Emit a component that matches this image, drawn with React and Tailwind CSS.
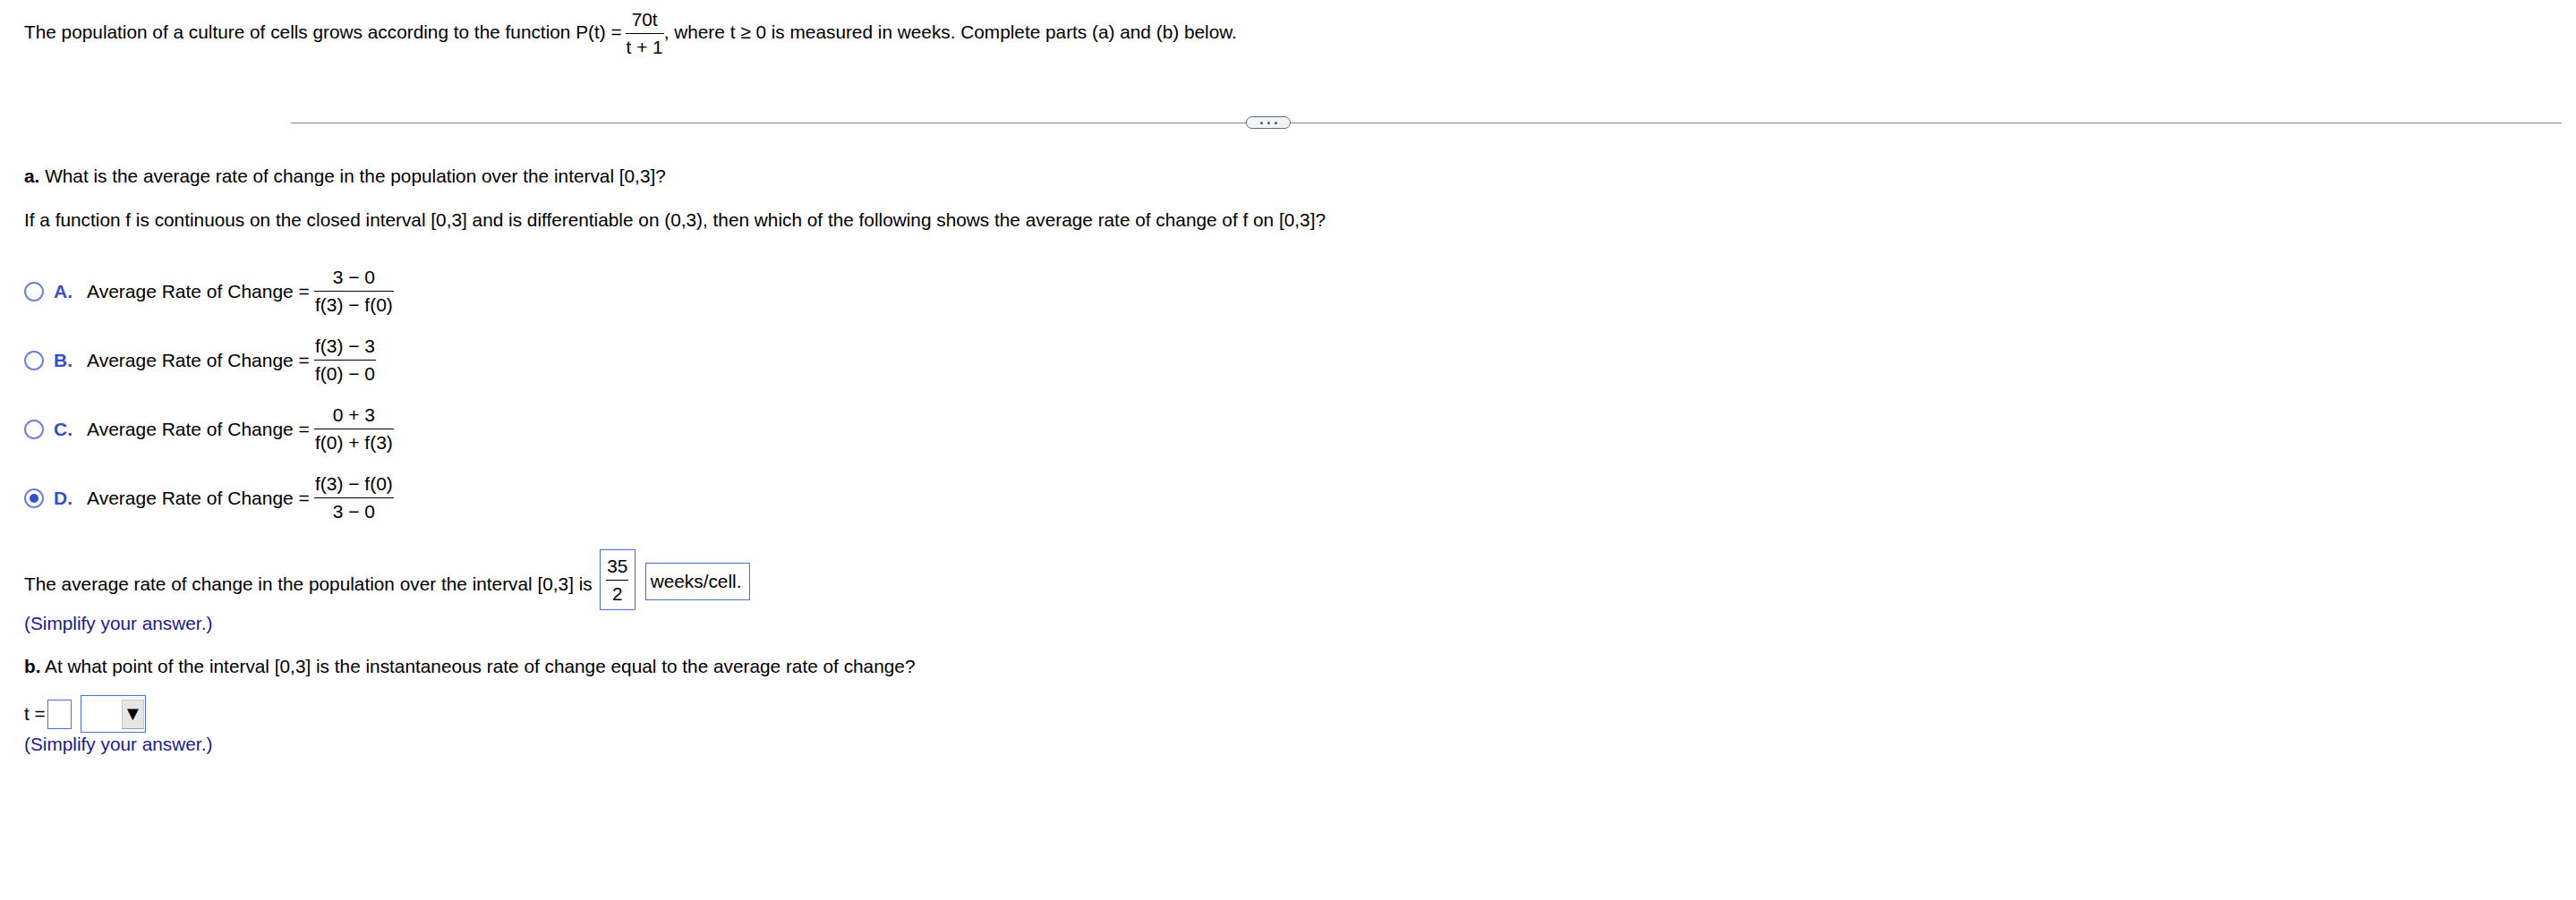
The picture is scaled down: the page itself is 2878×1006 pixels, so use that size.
import React from "react";

function Frac({ num, den, className = "" }) {
  return (
    <span className={"inline-flex flex-col items-center align-middle " + className}>
      <span className="px-[1px] leading-[24px] pb-[3px] whitespace-nowrap">{num}</span>
      <span className="w-full h-px bg-black"></span>
      <span className="px-[1px] leading-[24px] pt-[3px] whitespace-nowrap">{den}</span>
    </span>
  );
}

function Option({ letter, num, den, selected }) {
  return (
    <div className="h-[77px] flex items-center text-[21px]">
      <span className="w-[22px] h-[22px] rounded-full border-2 border-[#7081d6] bg-white flex items-center justify-center shrink-0">
        {selected && <span className="w-[10px] h-[10px] rounded-full bg-[#3650c6]"></span>}
      </span>
      <span className="ml-[11px] w-[37px] font-bold text-[#3a4fc4]">{letter}.</span>
      <span className="whitespace-nowrap">Average Rate of Change =</span>
      <Frac num={num} den={den} className="ml-[5px]" />
    </div>
  );
}

export default function App() {
  return (
    <div className="w-[2878px] min-h-[1006px] bg-white text-black text-[20.8px] font-['Liberation_Sans',Arial,sans-serif]">
      <div className="px-[27px]">
        <div className="h-[74px] flex items-center">
          <span className="whitespace-nowrap">
            The population of a culture of cells grows according to the function P(t) =
            <Frac num="70t" den="t + 1" className="ml-[4px]" />, where t ≥ 0 is measured in weeks. Complete parts (a) and (b) below.
          </span>
        </div>
      </div>

      <div className="mt-[56px] h-[14px] flex items-center pl-[325px] pr-[16px]">
        <div className="w-[1067px] h-px bg-[#7d8692]"></div>
        <div className="w-[50px] h-[14px] rounded-full border border-[#5f6b7a] bg-[#f3f4f6] flex items-center justify-center gap-[5px]">
          <span className="w-[3px] h-[3px] rounded-full bg-[#4b5563]"></span>
          <span className="w-[3px] h-[3px] rounded-full bg-[#4b5563]"></span>
          <span className="w-[3px] h-[3px] rounded-full bg-[#4b5563]"></span>
        </div>
        <div className="flex-1 h-px bg-[#7d8692]"></div>
      </div>

      <div className="px-[27px]">
        <div className="mt-[38px] h-[30px] flex items-center whitespace-nowrap">
          <span><span className="font-bold">a.</span> What is the average rate of change in the population over the interval [0,3]?</span>
        </div>
        <div className="mt-[19px] h-[30px] flex items-center whitespace-nowrap">
          If a function f is continuous on the closed interval [0,3] and is differentiable on (0,3), then which of the following shows the average rate of change of f on [0,3]?
        </div>

        <div className="mt-[26px]">
          <Option letter="A" num="3 − 0" den="f(3) − f(0)" />
          <Option letter="B" num="f(3) − 3" den="f(0) − 0" />
          <Option letter="C" num="0 + 3" den="f(0) + f(3)" />
          <Option letter="D" num="f(3) − f(0)" den="3 − 0" selected />
        </div>

        <div className="mt-[19px] h-[68px] flex items-center whitespace-nowrap">
          <span className="pt-[10px]">The average rate of change in the population over the interval [0,3] is</span>
          <span className="ml-[8px] w-[40px] h-[68px] border border-[#4a6fd6] flex items-center justify-center">
            <Frac num="35" den="2" />
          </span>
          <span className="ml-[11px] w-[117px] h-[42px] border border-[#4a6fd6] flex items-center pl-[5px] mt-[4px]">
            weeks/cell.
          </span>
        </div>
        <div className="h-[30px] flex items-center text-[#1c1c8c]">(Simplify your answer.)</div>

        <div className="mt-[18px] h-[30px] flex items-center whitespace-nowrap">
          <span><span className="font-bold">b.</span> At what point of the interval [0,3] is the instantaneous rate of change equal to the average rate of change?</span>
        </div>

        <div className="mt-[17px] h-[42px] flex items-center">
          <span className="w-[26px]">t =</span>
          <span className="w-[27px] h-[33px] border border-[#4a6fd6] bg-white"></span>
          <span className="ml-[10px] w-[73px] h-[42px] border border-[#4a6fd6] bg-white flex items-center justify-end pr-[1px]">
            <span className="w-[25px] h-[33px] bg-[#e6e6e6] border border-[#c8c8c8] border-b-[#999] flex items-center justify-center text-[22px] leading-none">▼</span>
          </span>
        </div>
        <div className="h-[26px] flex items-center text-[#1c1c8c]">(Simplify your answer.)</div>
      </div>
    </div>
  );
}
